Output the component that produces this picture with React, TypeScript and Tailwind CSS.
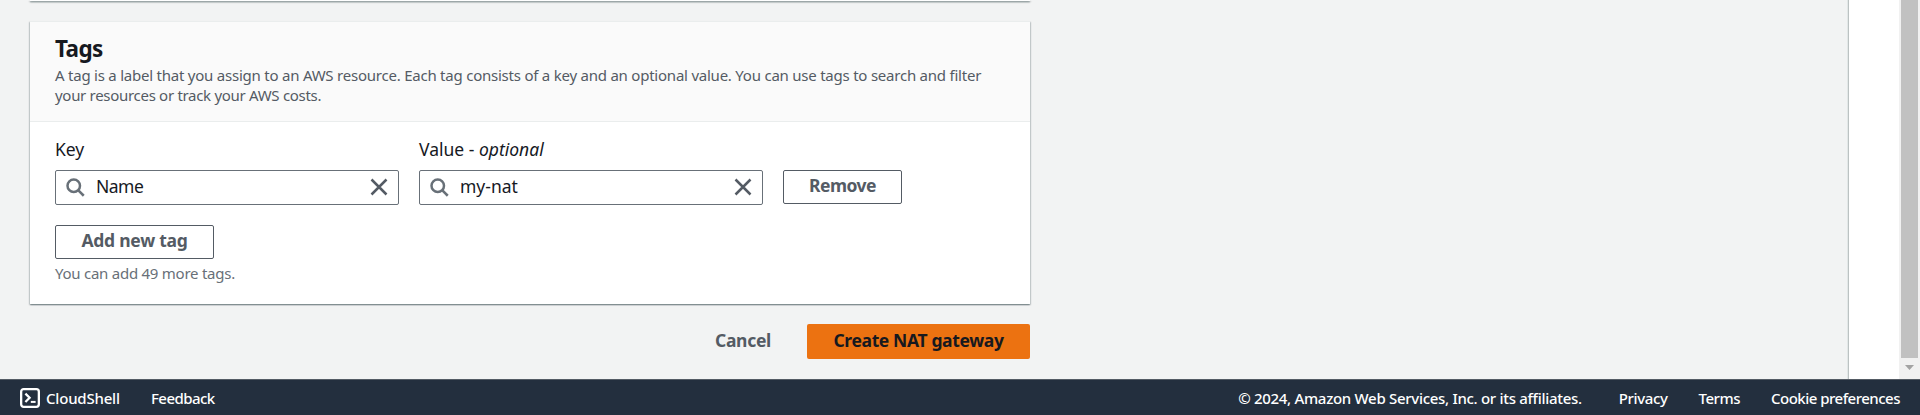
import type { ReactNode } from 'react';

const cardShadow =
  'shadow-[0_1.25px_1.25px_0_rgba(0,28,36,0.4),1.25px_1.25px_1.25px_0_rgba(0,28,36,0.15),-1.25px_1.25px_1.25px_0_rgba(0,28,36,0.15)]';

function SearchIcon() {
  return (
    <svg className="mb-[2px] ml-[9px] h-5 w-5 shrink-0" viewBox="0 0 16 16" fill="none" stroke="#687078" strokeWidth="2">
      <circle cx="7" cy="7" r="5" />
      <path d="m15 15-4.5-4.5" />
    </svg>
  );
}

function CloseIcon() {
  return (
    <svg className="mb-[2px] mr-[9px] h-5 w-5 shrink-0" viewBox="0 0 16 16" fill="none" stroke="#545b64" strokeWidth="2">
      <path d="m2 2 12 12M14 2 2 14" />
    </svg>
  );
}

function CloudShellIcon() {
  return (
    <svg className="h-5 w-5 shrink-0" viewBox="0 0 20 20" fill="none" stroke="#fff" strokeWidth="2.3">
      <rect x="1.15" y="1.15" width="17.7" height="17.7" rx="2.5" />
      <path d="m5.4 5.6 4.2 4.2-4.2 4.2" />
      <path d="M10.8 13.9h4.8" strokeWidth="2" />
    </svg>
  );
}

function Field({ label, value, valueClass }: { label: ReactNode; value: string; valueClass: string }) {
  return (
    <div className="w-[344px]">
      <div className="mb-[10px] h-[21px] whitespace-pre leading-[21px]">{label}</div>
      <div className="flex h-[35px] items-center rounded-[2px] border border-[#687078] bg-white">
        <SearchIcon />
        <span className={`ml-[11px] flex-1 pb-[3px] leading-[24px] ${valueClass}`}>{value}</span>
        <CloseIcon />
      </div>
    </div>
  );
}

function Button({ children, className }: { children: ReactNode; className: string }) {
  return (
    <button
      className={`flex h-[34px] items-center justify-center whitespace-nowrap rounded-[2px] border border-[#545b64] bg-white pb-[4px] font-bold leading-[24px] text-[#545b64] ${className}`}
    >
      {children}
    </button>
  );
}

export default function App() {
  return (
    <div className="flex h-[415px] w-full flex-col overflow-hidden bg-[#f2f3f3] font-['Noto_Sans','Open_Sans',sans-serif] text-[17.5px] text-[#16191f]">
      <div className="flex h-[379px]">
        <main className="flex-1 bg-[#f2f3f3] pl-[30px]">
          <div className={`h-px w-[1000px] bg-white ${cardShadow}`} />
          <section className={`mt-[20px] h-[283px] w-[1000px] border-t border-[#eaeded] bg-white ${cardShadow}`}>
            <header className="h-[100px] border-b border-[#eaeded] bg-[#fafafa] pl-[25px] pt-[13px]">
              <h2 className="text-[22.5px] font-bold leading-[28px] tracking-[-0.6px]">Tags</h2>
              <p className="mt-[2px] whitespace-nowrap text-[15px] leading-[20px] text-[#545b64]">
                <span className="tracking-[-0.228px]">
                  A tag is a label that you assign to an AWS resource. Each tag consists of a key and an optional value. You can use tags to search and filter
                </span>
                <br />
                <span className="tracking-[-0.3px]">your resources or track your AWS costs.</span>
              </p>
            </header>
            <div className="px-[25px] pt-[17px]">
              <div className="flex items-end gap-[20px]">
                <Field label="Key" value="Name" valueClass="tracking-[-0.5px]" />
                <Field
                  label={
                    <>
                      Value - <i>optional</i>
                    </>
                  }
                  value="my-nat"
                  valueClass=""
                />
                <Button className="mb-px w-[119px] tracking-[-0.5px]">Remove</Button>
              </div>
              <Button className="mt-[20px] w-[159px] tracking-[-0.26px]">Add new tag</Button>
              <p className="mt-[4px] text-[15px] leading-[20px] tracking-[-0.25px] text-[#687078]">You can add 49 more tags.</p>
            </div>
          </section>
          <div className="mt-[20px] flex h-[35px] w-[1000px] items-center justify-end gap-[36px] font-bold leading-[24px]">
            <button className="pb-[3px] tracking-[-0.3px] text-[#545b64]">Cancel</button>
            <button className="h-[35px] w-[223px] rounded-[2px] bg-[#ec7211] pb-[3px] tracking-[-0.37px] text-[#16191f]">
              Create NAT gateway
            </button>
          </div>
        </main>
        <aside className="w-[51px] border-l border-[#bcc2c2] bg-white shadow-[-1px_0_0_0_#e2e7e7]" />
        <div className="flex w-[21px] flex-col items-center bg-[#f1f1f1]">
          <div className="h-[358px] w-[17px] bg-[#c1c1c1]" />
          <svg className="mt-[7px] h-[5px] w-[9px]" viewBox="0 0 9 5">
            <path d="M0 0h9L4.5 5z" fill="#a3a3a3" />
          </svg>
        </div>
      </div>
      <footer className="flex h-[36px] items-center whitespace-nowrap border-t border-[#545b64] bg-[#232f3e] px-[20px] text-[15px] font-medium leading-[20px] text-white">
        <CloudShellIcon />
        <span className="ml-[6px] mt-px w-[105px] tracking-[-0.2px]">CloudShell</span>
        <span className="mt-px tracking-[-0.55px]">Feedback</span>
        <span className="ml-auto mt-px tracking-[-0.3px]">© 2024, Amazon Web Services, Inc. or its affiliates.</span>
        <span className="ml-[37px] mt-px tracking-[-0.35px]">Privacy</span>
        <span className="ml-[31px] mt-px tracking-[-0.5px]">Terms</span>
        <span className="ml-[31px] mt-px tracking-[-0.5px]">Cookie preferences</span>
      </footer>
    </div>
  );
}
